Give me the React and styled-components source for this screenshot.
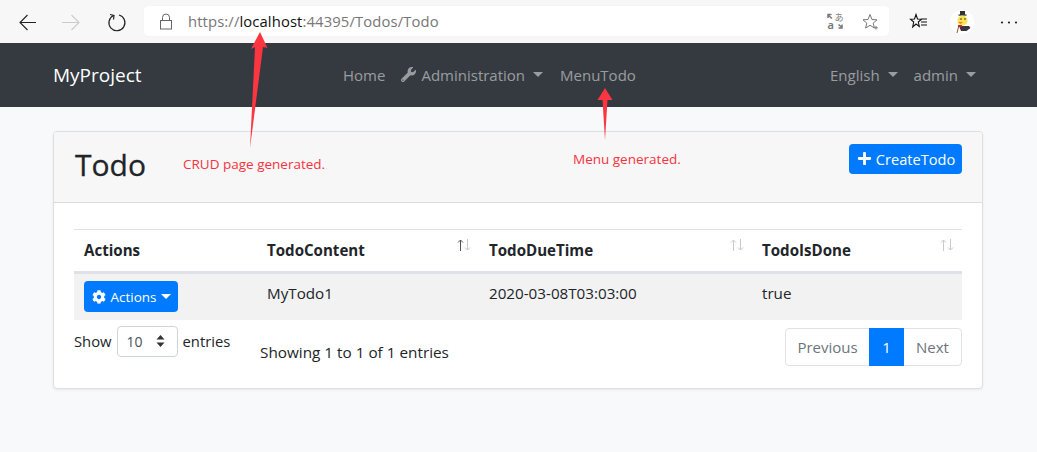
import React from "react";
import styled, { createGlobalStyle } from "styled-components";
import { FaWrench, FaPlus, FaCog } from "react-icons/fa";

const Global = createGlobalStyle`
  html, body { margin: 0; padding: 0; background: #f8f9fa; }
  body { font-family: "Open Sans", "Noto Sans", sans-serif; font-size: 15px; color: #212529; width: 1037px; height: 452px; overflow: hidden; }
  * { box-sizing: border-box; }
`;

const Page = styled.div`position: relative; width: 1037px; height: 452px; overflow: hidden;`;
const Chrome = styled.header`height: 43px; background: #f7f7f7; display: flex; align-items: center; padding: 0 0 0 18px;`;
const ChromeBtn = styled.span`width: 20px; height: 20px; display: flex; margin-left: ${p => p.$left || 0}px; margin-right: ${p => p.$gap || 0}px;`;
const Address = styled.div`width: 745px; height: 30px; margin-top: -1px; background: #fff; border-radius: 4px; display: flex; align-items: center; padding: 0 10px 0 15px; box-shadow: 0 0 1px rgba(0,0,0,.08);`;
const Url = styled.div`margin-left: 15px; flex: 1; font-size: 14.8px; color: #767676; letter-spacing: .12px;`;
const UrlHost = styled.span`color: #111;`;
const AddrIcon = styled.span`display: flex; margin-left: ${p => p.$gap}px; color: #777;`;
const Avatar = styled.span`width: 24px; height: 24px; border-radius: 50%; background: #fff; display: flex;`;

const Nav = styled.nav`height: 64px; background: #343a40; display: flex; align-items: center; padding: 0 53px;`;
const Brand = styled.a`font-size: 19px; color: #fff; font-weight: 400; width: 290px;`;
const NavMid = styled.div`display: flex; align-items: center; margin-top: -1px;`;
const NavRight = styled.div`display: flex; align-items: center; margin-left: auto; margin-right: 8px; margin-top: -1px;`;
const NavLink = styled.a`font-size: 15px; color: rgba(255,255,255,.5); display: flex; align-items: center; margin-right: ${p => p.$gap}px; white-space: nowrap;`;
const Caret = styled.i`display: inline-block; margin-left: ${p => p.$gap ?? 8}px; width: 0; height: 0; border-top: 5px solid ${p => p.$c || "rgba(255,255,255,.5)"}; border-left: 5px solid transparent; border-right: 5px solid transparent;`;

const Main = styled.main`padding: 24px 54px 0 53px;`;
const Card = styled.section`background: #fff; border: 1px solid #dfdfdf; border-radius: 4px; box-shadow: 0 1px 3px rgba(0,0,0,.07); height: 258px;`;
const CardHead = styled.div`height: 71px; background: #f7f7f7; border-bottom: 1px solid #dcdcdc; border-radius: 3px 3px 0 0; display: flex; align-items: center; justify-content: space-between; padding: 0 20px 0 21px;`;
const Title = styled.h1`margin: -4px 0 0; font-size: 30px; font-weight: 400; line-height: 1; color: #212529; -webkit-text-stroke: .3px #212529;`;
const PrimaryBtn = styled.button`background: #007bff; color: #fff; border: 0; border-radius: 4px; font: inherit; font-size: 14.6px; height: 30px; width: 113px; display: flex; align-items: center; justify-content: center; gap: 4px; margin-top: -17px; padding: 0 0 0 1px;`;
const Body = styled.div`padding: 26px 20px 0;`;
const Table = styled.table`width: 888px; border-collapse: collapse; table-layout: fixed; border-top: 1px solid #dee2e6;`;
const Th = styled.th`position: relative; height: 43px; padding: 0 10px 1px; text-align: left; font-size: 15.1px; font-weight: 700; color: #212529; border-bottom: 3px solid #dee2e6;`;
const SortIcon = styled.svg`position: absolute; right: ${p => p.$r}px; top: 8px;`;
const Tr = styled.tr`background: #f2f2f2;`;
const Td = styled.td`height: 47px; padding: 9px 10px 0; vertical-align: top; font-size: 15.2px; color: #212529;`;
const ActionsCell = styled(Td)`padding-top: 7px;`;
const ActionsBtn = styled.button`background: #007bff; color: #fff; border: 0; border-radius: 4px; font: inherit; font-size: 13.5px; height: 31px; width: 94px; display: flex; align-items: center; justify-content: center; gap: 4px; padding: 0 0 0 1px;`;
const Footer = styled.div`display: flex; align-items: flex-start; margin-top: 6px;`;
const Len = styled.div`display: flex; align-items: center; gap: 5px; width: 186px; font-size: 14.8px; height: 30px;`;
const Select = styled.div`width: 61px; height: 31px; border: 1px solid #ced4da; border-radius: 4px; background: #fff; display: flex; align-items: center; justify-content: space-between; padding: 0 12px 0 9px; font-size: 14px; color: #495057; margin-top: 1px;`;
const Info = styled.div`font-size: 15.3px; margin-top: 16px; color: #212529;`;
const Pager = styled.div`margin-left: auto; margin-top: 2px; display: flex; height: 38px; border: 1px solid #dee2e6; border-radius: 4px; font-size: 15px; color: #6c757d;`;
const PageItem = styled.span`display: flex; align-items: center; justify-content: center; width: ${p => p.$w}px; ${p => p.$on && "background:#007bff;color:#fff;margin:-1px 0;"}`;

const Note = styled.span`position: absolute; left: ${p => p.$x}px; top: ${p => p.$y}px; color: #f5333f; font-size: 13.5px; white-space: nowrap;`;
const Overlay = styled.svg`position: absolute; left: 0; top: 0; pointer-events: none;`;

const Sort = ({ r, dark }) => (
  <SortIcon $r={r} width="14" height="14" viewBox="0 0 14 14" fill="none">
    <path d="M3.500 13V2M1 4.500 3.500 2 6 4.500" stroke={dark ? "#555" : "#ccc"} strokeWidth="1" />
    <path d="M10.500 1v11M8 9.500 10.500 12 13 9.500" stroke="#c8c8c8" strokeWidth="1" />
  </SortIcon>
);

export default function App() {
  return (
    <Page>
      <Global />
      <Chrome>
        <ChromeBtn $gap={23}>
          <svg width="20" height="20" viewBox="0 0 20 20" fill="none" stroke="#222" strokeWidth="1.100"><path d="M18 10.500H2M9.500 3 2 10.500 9.500 18" /></svg>
        </ChromeBtn>
        <ChromeBtn $gap={26}>
          <svg width="20" height="20" viewBox="0 0 20 20" fill="none" stroke="#ccc" strokeWidth="1.100"><path d="M1 10.500H18M10.500 3 18 10.500 10.500 18" /></svg>
        </ChromeBtn>
        <ChromeBtn $gap={17}>
          <svg width="20" height="20" viewBox="0 0 20 20" fill="none" stroke="#222" strokeWidth="1.200"><path d="M6.500 3.500A8 8 0 1 0 12 3" /><path d="M3 2.500 7 3.500 6.500 7.500" /></svg>
        </ChromeBtn>
        <Address>
          <svg width="14" height="17" viewBox="0 0 14 17" fill="none" stroke="#666" strokeWidth="1"><rect x="1.500" y="7.500" width="11" height="8.500" /><path d="M3.500 7.500V4.500a3.500 3.500 0 0 1 7 0v3" /></svg>
          <Url>https://<UrlHost>localhost</UrlHost>:44395/Todos/Todo</Url>
          <AddrIcon $gap={0}>
            <svg width="20" height="20" viewBox="0 0 20 20" fill="none">
              <path d="M2 4 6 7.500M2 7V3.500H5.500M16 16.500 12.500 13.500M16 13.500V17H12.500" stroke="#777" strokeWidth="1.500" />
              <text x="8.500" y="9.500" fontSize="9" fill="#777" fontFamily="Noto Sans CJK JP, sans-serif">あ</text>
              <text x="1.500" y="17.500" fontSize="11" fontWeight="600" fill="#777" fontFamily="Noto Sans, sans-serif">a</text>
            </svg>
          </AddrIcon>
          <AddrIcon $gap={16}>
            <svg width="17" height="17" viewBox="0 0 17 17" fill="none" stroke="#777" strokeWidth="1"><path d="M8 1.500 10 6.500l5 .3-3.800 3.300 1.200 4.900L8 12.300l-4.400 2.700 1.200-4.900L1 6.800l5-.3zM14 13v3.500M12.300 14.800h3.500" /></svg>
          </AddrIcon>
        </Address>
        <ChromeBtn $left={20} $gap={21}>
          <svg width="20" height="20" viewBox="0 0 20 20" fill="none" stroke="#111" strokeWidth="1.100"><path d="M7 2.500 8.500 7l4 .2-3.200 2.800 1 4.500L7 12l-3.300 3 1-5L1.500 7.200l4-.2zM12 7h6M12 10h6M12 13h6" /></svg>
        </ChromeBtn>
        <Avatar>
          <svg width="24" height="24" viewBox="0 0 24 24">
            <rect x="10" y="1" width="5" height="4" fill="#333" /><rect x="8.500" y="4.500" width="8" height="1.200" fill="#333" />
            <ellipse cx="12.500" cy="10.500" rx="5" ry="5" fill="#f9e254" /><path d="M8 12h5l-2.500 2z" fill="#e58a1f" />
            <circle cx="11" cy="9" r=".8" fill="#222" /><circle cx="15" cy="9" r=".8" fill="#222" />
            <path d="M9 16h10l1.500 2-4 3H11z" fill="#3b3440" /><path d="M8 15h4v2H8z" fill="#c22" /><path d="M8.500 17 7 23" stroke="#8a5a2c" strokeWidth="1" />
          </svg>
        </Avatar>
        <ChromeBtn $left={25}>
          <svg width="20" height="20" viewBox="0 0 20 20" fill="#222"><circle cx="3" cy="10.500" r="1.100" /><circle cx="10" cy="10.500" r="1.100" /><circle cx="17" cy="10.500" r="1.100" /></svg>
        </ChromeBtn>
      </Chrome>

      <Nav>
        <Brand>MyProject</Brand>
        <NavMid>
          <NavLink $gap={16}>Home</NavLink>
          <NavLink $gap={17}><FaWrench size={15} style={{ marginRight: 5 }} />Administration<Caret /></NavLink>
          <NavLink $gap={0}>MenuTodo</NavLink>
        </NavMid>
        <NavRight>
          <NavLink $gap={16}>English<Caret /></NavLink>
          <NavLink $gap={0}>admin<Caret /></NavLink>
        </NavRight>
      </Nav>

      <Main>
        <Card>
          <CardHead>
            <Title>Todo</Title>
            <PrimaryBtn><FaPlus size={15} />CreateTodo</PrimaryBtn>
          </CardHead>
          <Body>
            <Table>
              <colgroup><col width="183" /><col width="222" /><col width="273" /><col width="210" /></colgroup>
              <thead>
                <tr>
                  <Th>Actions</Th>
                  <Th>TodoContent<Sort r={8} dark /></Th>
                  <Th>TodoDueTime<Sort r={8} /></Th>
                  <Th>TodoIsDone<Sort r={8} /></Th>
                </tr>
              </thead>
              <tbody>
                <Tr>
                  <ActionsCell><ActionsBtn><FaCog size={14} />Actions<Caret $gap={0} $c="#fff" /></ActionsBtn></ActionsCell>
                  <Td>MyTodo1</Td>
                  <Td>2020-03-08T03:03:00</Td>
                  <Td>true</Td>
                </Tr>
              </tbody>
            </Table>
            <Footer>
              <Len>Show
                <Select>10
                  <svg width="9" height="12" viewBox="0 0 9 12" fill="#333"><path d="M4.500 0 8.500 4.500H.5zM4.500 12 .5 7.500h8z" /></svg>
                </Select>
                entries</Len>
              <Info>Showing 1 to 1 of 1 entries</Info>
              <Pager>
                <PageItem $w={83}>Previous</PageItem>
                <PageItem $w={35} $on>1</PageItem>
                <PageItem $w={57}>Next</PageItem>
              </Pager>
            </Footer>
          </Body>
        </Card>
      </Main>

      <Overlay width="1037" height="452" viewBox="0 0 1037 452">
        <path d="M260 32 267.500 48 263 47 250 148 255 47 251 49z" fill="#fb3640" />
        <path d="M605 88 612.500 100 607.500 100 605 140 602.500 100 597.500 100z" fill="#fb3640" />
      </Overlay>
      <Note $x={183} $y={155}>CRUD page generated.</Note>
      <Note $x={573} $y={150}>Menu generated.</Note>
    </Page>
  );
}
